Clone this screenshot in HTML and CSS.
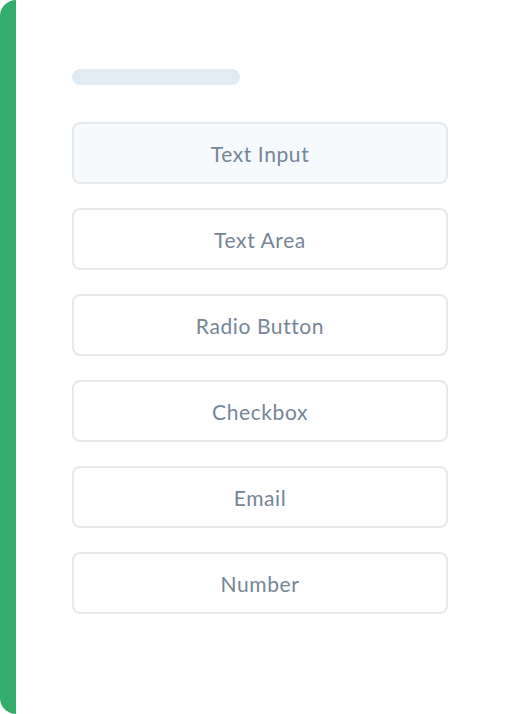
FILE: index.html
```html
<!DOCTYPE html>
<html lang="en">
<head>
    <meta charset="UTF-8">
    <meta name="viewport" content="width=device-width, initial-scale=1.0">
    <title>Form Fields</title>
    <link rel="stylesheet" href="styles.css">
</head>
<body>
    <div class="panel">
        <div class="panel-title"></div>
        <div class="field-list">
            <div class="field-item active">Text Input</div>
            <div class="field-item">Text Area</div>
            <div class="field-item">Radio Button</div>
            <div class="field-item">Checkbox</div>
            <div class="field-item">Email</div>
            <div class="field-item">Number</div>
        </div>
    </div>
</body>
</html>
```

FILE: styles.css
```css
body {
    margin: 0;
    padding: 0;
    background-color: #ffffff;
    font-family: Lato, "Noto Sans", sans-serif;
}

.panel {
    box-sizing: border-box;
    height: 714px;
    background-color: #ffffff;
    border-left: 16px solid #34ad6b;
    border-radius: 16px 0 0 16px;
    padding: 69px 0 0 56px;
}

.panel-title {
    width: 168px;
    height: 16px;
    border-radius: 8px;
    background-color: #e1ebf4;
    margin-bottom: 37px;
}

.field-list {
    display: flex;
    flex-direction: column;
    gap: 24px;
    width: 376px;
}

.field-item {
    box-sizing: border-box;
    height: 62px;
    display: flex;
    align-items: center;
    justify-content: center;
    border: 2px solid #e6e8eb;
    border-radius: 8px;
    background-color: #ffffff;
    color: #758697;
    font-size: 21px;
    letter-spacing: 0.6px;
}

.field-item.active {
    background-color: #f7fafd;
}
```
